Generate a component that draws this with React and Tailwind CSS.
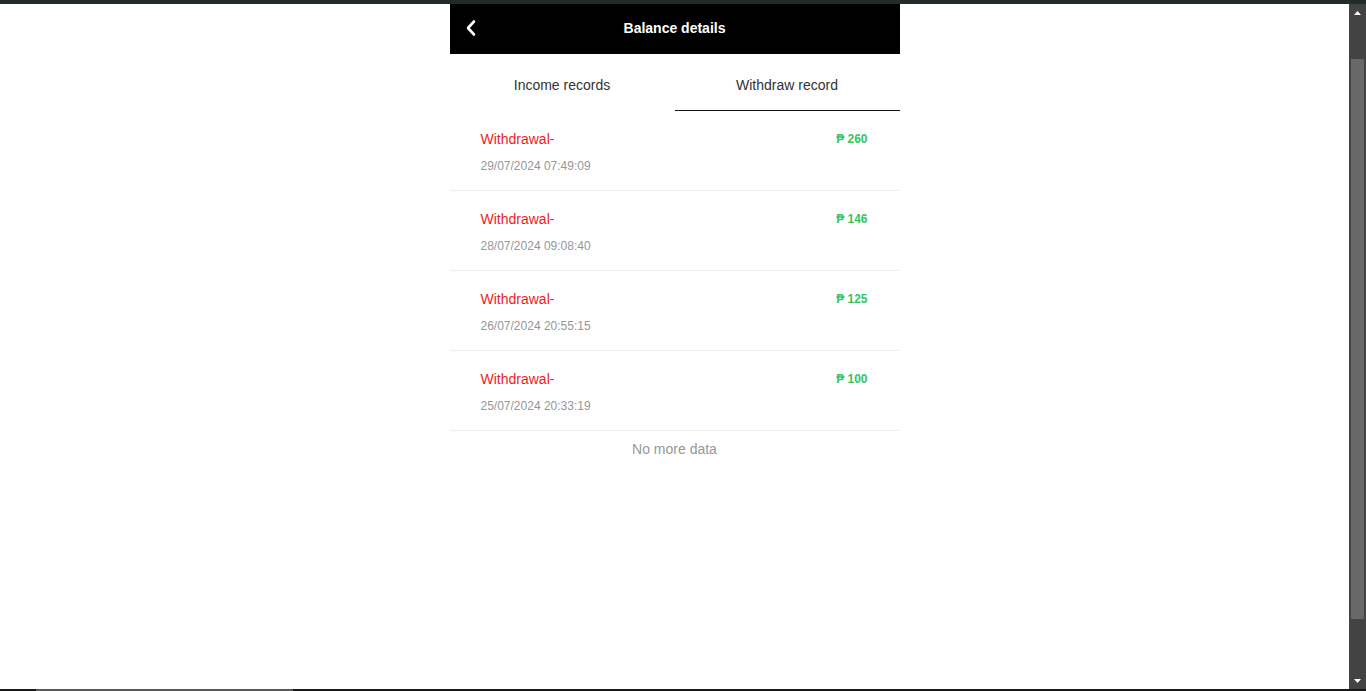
import React from "react";

const rows = [
  { date: "29/07/2024 07:49:09", amount: "260" },
  { date: "28/07/2024 09:08:40", amount: "146" },
  { date: "26/07/2024 20:55:15", amount: "125" },
  { date: "25/07/2024 20:33:19", amount: "100" },
];

export default function App() {
  return (
    <div
      className="w-[1366px] h-[691px] flex flex-col overflow-hidden bg-white"
      style={{ fontFamily: '"Liberation Sans", Arial, sans-serif' }}
    >
      <div className="h-[4px] bg-[#232a2a] shrink-0" />
      <div className="flex flex-1 min-h-0">
        <div className="flex-1 bg-white">
          <div className="w-[450px] mx-auto">
            <div className="h-[50px] bg-black flex items-center relative pb-[2px]">
              <div className="absolute left-[15px] top-0 h-full flex items-center pb-[2px]">
                <svg width="12" height="18" viewBox="0 0 12 18" fill="none">
                  <path
                    d="M9 2.5 L3 9 L9 15.5"
                    stroke="white"
                    strokeWidth="2.6"
                    strokeLinecap="round"
                    strokeLinejoin="round"
                  />
                </svg>
              </div>
              <div className="flex-1 text-center text-white text-[14px] font-bold">
                Balance details
              </div>
            </div>
            <div className="flex h-[57px]">
              <div className="flex-1 flex items-center justify-center pt-[6px] text-[14px] text-[#323233]">
                Income records
              </div>
              <div className="flex-1 flex items-center justify-center pt-[6px] text-[14px] text-[#323233] border-b border-[#111]">
                Withdraw record
              </div>
            </div>
            {rows.map((r) => (
              <div
                key={r.date}
                className="h-[80px] border-b border-[#ebedf0] pl-[31px] pr-[32px] pt-[18px] flex justify-between"
              >
                <div>
                  <div className="text-[14px] leading-[20px] text-[#ee1c25]">
                    Withdrawal-
                  </div>
                  <div className="text-[12px] leading-[16px] mt-[9px] text-[#969799]">
                    {r.date}
                  </div>
                </div>
                <div className="text-[12px] leading-[20px] font-bold text-[#34c563]">
                  ₱ {r.amount}
                </div>
              </div>
            ))}
            <div className="h-[36px] flex items-center justify-center text-[14px] text-[#969799]">
              No more data
            </div>
          </div>
        </div>
        <div className="w-[17px] bg-[#434343] flex flex-col items-center shrink-0">
          <div className="h-[17px] flex items-center justify-center">
            <svg width="7" height="4" viewBox="0 0 7 4">
              <path d="M0 4 L3.5 0 L7 4 Z" fill="white" />
            </svg>
          </div>
          <div className="flex-1 w-full px-[2px] pt-[38px] pb-[53px]">
            <div className="w-full h-full bg-[#686868]" />
          </div>
          <div className="h-[17px] flex items-center justify-center">
            <svg width="7" height="4" viewBox="0 0 7 4">
              <path d="M0 0 L7 0 L3.5 4 Z" fill="white" />
            </svg>
          </div>
        </div>
      </div>
      <div className="h-[2px] bg-[#1a1a1a] shrink-0 flex">
        <div className="ml-[36px] w-[257px] bg-[#5a5a5a]" />
      </div>
    </div>
  );
}
